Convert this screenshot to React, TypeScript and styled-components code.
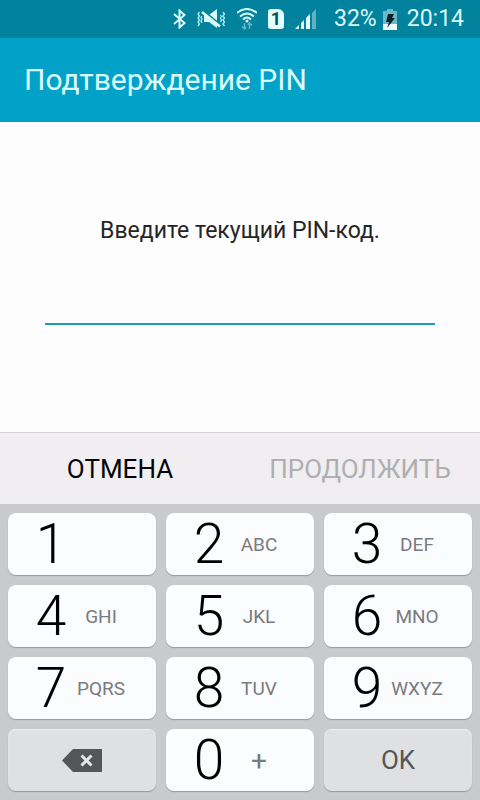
import React, { useState } from 'react';
import styled, { createGlobalStyle } from 'styled-components';

const GlobalStyle = createGlobalStyle`
  * { box-sizing: border-box; }
  body { margin: 0; font-family: Roboto, "Noto Sans", sans-serif; background: #fdfdfe; }
  button, input { font: inherit; border: 0; padding: 0; }
`;

const Screen = styled.div`
  display: flex;
  flex-direction: column;
  min-height: 100vh;
`;

const StatusBar = styled.div`
  display: flex;
  align-items: center;
  justify-content: flex-end;
  height: 38px;
  padding: 0 16px;
  background: #02829c;
  color: #d9fbff;
  font-size: 23px;
  line-height: 36px;
`;

const StatusIcons = styled.div`
  display: flex;
  align-items: center;
  gap: 11px;
  margin-right: 18px;
`;

const Battery = styled.span`
  display: flex;
  align-items: center;
  gap: 6px;
  margin-right: 10px;
`;

const AppBar = styled.header`
  display: flex;
  align-items: center;
  height: 84px;
  padding: 0 24px;
  background: #02a1c8;
`;

const Title = styled.h1`
  margin: 0;
  color: #dcfbff;
  font-size: 30px;
  font-weight: 400;
  line-height: 36px;
`;

const Form = styled.form`
  display: flex;
  flex: 1;
  flex-direction: column;
`;

const Content = styled.div`
  display: flex;
  flex: 1;
  flex-direction: column;
  align-items: center;
  padding: 93px 45px 0;
`;

const Prompt = styled.label`
  color: #252527;
  font-size: 23px;
  line-height: 32px;
`;

const PinInput = styled.input`
  width: 100%;
  height: 48px;
  margin-top: 30px;
  border-bottom: 2px solid #1e9daf;
  border-radius: 0;
  outline: none;
  background: transparent;
  color: #252527;
  font-size: 23px;
  text-align: center;
`;

const Actions = styled.div`
  display: grid;
  grid-template-columns: 1fr 1fr;
  height: 72px;
  border-top: 1px solid #d2d0d3;
  background: #f0eef1;
`;

const Action = styled.button`
  background: transparent;
  color: #050505;
  font-size: 26px;
  &:disabled { color: #afaeb0; }
`;

const Keypad = styled.div`
  display: grid;
  grid-template-columns: repeat(3, 1fr);
  gap: 10px;
  padding: 9px 8px;
  background: #c9cacc;
`;

const Key = styled.button<{ $tone?: 'light' | 'dark' }>`
  display: flex;
  align-items: center;
  justify-content: center;
  height: 62px;
  padding-right: ${({ $tone }) => ($tone === 'dark' ? 0 : 12)}px;
  border-radius: 8px;
  background: ${({ $tone }) => ($tone === 'dark' ? '#dfe0e2' : '#fbfcfe')};
  box-shadow: 0 1px 1px #96989b${({ $tone }) => ($tone === 'dark' ? ', inset 0 1px 1px #eeeff0' : '')};
  color: #555658;
  font-size: 26px;
`;

const Digit = styled.span`
  width: 50px;
  color: #000;
  font-size: 55px;
  font-weight: 300;
  line-height: 62px;
  text-align: center;
`;

const Letters = styled.span<{ $symbol?: boolean }>`
  display: flex;
  justify-content: center;
  width: 50px;
  color: #797b7e;
  font-size: ${({ $symbol }) => ($symbol ? 28 : 19)}px;
`;

const BluetoothIcon = () => (
  <svg width="13" height="20" viewBox="0 0 13 20" fill="none" stroke="#d9fbff" strokeWidth="2" aria-hidden="true">
    <path d="M1 5l10.500 9-5 4.500V1.500l5 4.500L1 15" />
  </svg>
);

const VibrateIcon = () => (
  <svg width="29" height="20" viewBox="0 0 29 20" aria-hidden="true">
    <path d="M7 6h5l8-6v19l-8-6H7z" fill="#d9fbff" />
    <path d="M6 1.500l17 14" stroke="#02829c" strokeWidth="2" />
    <path d="M5 3l18 14.500" stroke="#d9fbff" strokeWidth="2.500" />
    <path
      d="M2.500 3L1 5l1.500 2L1 9l1.500 2L1 13l1.500 2L1 17M5 7L4 8.500 5 10l-1 2 1 2M26 3l1.500 2L26 7l1.500 2-1.500 2 1.500 2-1.500 2 1.500 2M23.500 6l1 1.500-1 1.500 1 2-1 2"
      fill="none"
      stroke="#b8edf4"
      strokeWidth="1.300"
    />
  </svg>
);

const WifiIcon = () => (
  <svg width="20" height="22" viewBox="0 0 20 22" aria-hidden="true">
    <g fill="none" stroke="#d9fbff" strokeWidth="2">
      <path d="M0 5Q10-3 20 5M3 8.500q7-6 14 0M6 11.500q4-4 8 0" />
    </g>
    <circle cx="10" cy="13" r="1.500" fill="#d9fbff" />
    <path d="M7.500 15v6M5 18.500L7.500 21l1.500-2M12.500 21v-6M11 17l1.500-2 2.500 2.500" fill="none" stroke="#63b8c8" strokeWidth="1.500" />
  </svg>
);

const SimBadge = styled.span`
  display: flex;
  align-items: center;
  justify-content: center;
  width: 16px;
  height: 20px;
  border-radius: 3px 6px 3px 3px;
  background: #e4fdff;
  color: #02505f;
  font-size: 18px;
  font-weight: 700;
  line-height: 20px;
`;

const SignalIcon = () => (
  <svg width="21" height="20" viewBox="0 0 21 20" aria-hidden="true">
    <path d="M0 20l4-4v4zM6 14l3-3v9H6zM11 9l4-4v15h-4z" fill="#e4fdff" />
    <path d="M17 4l4-4v20h-4z" fill="#61b1c2" />
  </svg>
);

const BatteryIcon = () => (
  <svg width="14" height="21" viewBox="0 0 14 21" aria-hidden="true">
    <path d="M4 0h6v2h4v13H0V2h4z" fill="#6fb8c7" />
    <path d="M0 15h14v6H0z" fill="#eefeff" />
    <path d="M5 5h6l-2 4h3L4 19l2-6H3z" fill="#07242b" />
  </svg>
);

const BackspaceIcon = () => (
  <svg width="40" height="23" viewBox="0 0 40 23" aria-hidden="true">
    <path d="M0 11.500L11 0h29v23H11z" fill="#555658" />
    <path d="M19.500 6.500l10 10m0-10l-10 10" stroke="#e5e6e7" strokeWidth="3" />
  </svg>
);

const digitKeys = [
  ['1', ''],
  ['2', 'ABC'],
  ['3', 'DEF'],
  ['4', 'GHI'],
  ['5', 'JKL'],
  ['6', 'MNO'],
  ['7', 'PQRS'],
  ['8', 'TUV'],
  ['9', 'WXYZ'],
];

export default function App() {
  const [pin, setPin] = useState('');
  const press = (digit: string) => setPin((value) => value + digit);

  return (
    <>
      <GlobalStyle />
      <Screen>
        <StatusBar>
          <StatusIcons>
            <BluetoothIcon />
            <VibrateIcon />
            <WifiIcon />
            <SimBadge>1</SimBadge>
            <SignalIcon />
          </StatusIcons>
          <Battery>
            32%
            <BatteryIcon />
          </Battery>
          <time>20:14</time>
        </StatusBar>
        <AppBar>
          <Title>Подтверждение PIN</Title>
        </AppBar>
        <Form onSubmit={(event) => event.preventDefault()}>
          <Content>
            <Prompt htmlFor="pin">Введите текущий PIN-код.</Prompt>
            <PinInput
              id="pin"
              type="password"
              inputMode="none"
              autoComplete="off"
              value={pin}
              onChange={(event) => setPin(event.target.value)}
            />
          </Content>
          <Actions>
            <Action type="button" onClick={() => setPin('')}>ОТМЕНА</Action>
            <Action type="submit" disabled={pin.length < 4}>ПРОДОЛЖИТЬ</Action>
          </Actions>
          <Keypad>
            {digitKeys.map(([digit, letters]) => (
              <Key key={digit} type="button" onClick={() => press(digit)}>
                <Digit>{digit}</Digit>
                <Letters>{letters}</Letters>
              </Key>
            ))}
            <Key type="button" $tone="dark" aria-label="Удалить" onClick={() => setPin(pin.slice(0, -1))}>
              <BackspaceIcon />
            </Key>
            <Key type="button" onClick={() => press('0')}>
              <Digit>0</Digit>
              <Letters $symbol>+</Letters>
            </Key>
            <Key type="submit" $tone="dark">OK</Key>
          </Keypad>
        </Form>
      </Screen>
    </>
  );
}
